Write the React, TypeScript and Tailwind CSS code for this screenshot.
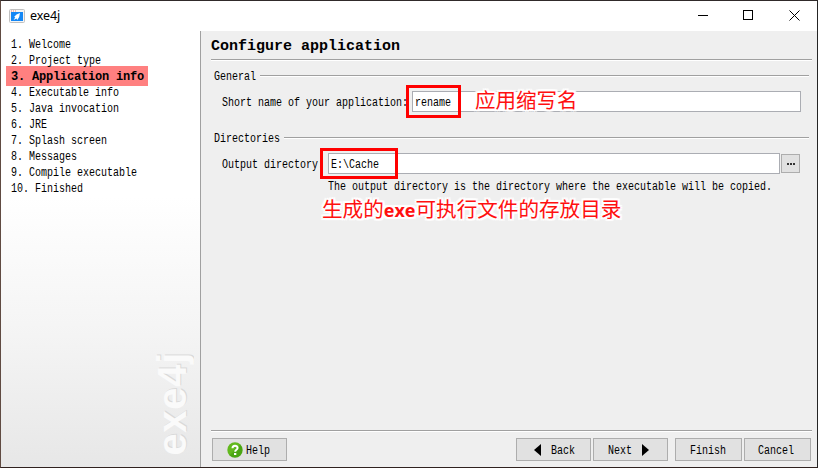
import type { ReactNode } from "react";

const steps = [
  "Welcome",
  "Project type",
  "Application info",
  "Executable info",
  "Java invocation",
  "JRE",
  "Splash screen",
  "Messages",
  "Compile executable",
  "Finished",
];

const ACTIVE_STEP = 2;

/* Narrow fixed-width label: every character advances six pixels. */
function Label({ children }: { children: string }) {
  return (
    <span className="block shrink-0" style={{ width: children.length * 6 }}>
      <span className="block w-max origin-left translate-y-px scale-x-[0.8333] whitespace-pre">{children}</span>
    </span>
  );
}

function Rule() {
  return <div className="h-[2px] flex-1 border-t border-[#a0a0a0] bg-white" />;
}

function Section({ title }: { title: string }) {
  return (
    <div className="flex h-4 items-center px-[3px]">
      <Label>{title}</Label>
      <div className="ml-1 flex flex-1">
        <Rule />
      </div>
    </div>
  );
}

function Button({ className, children }: { className: string; children: ReactNode }) {
  return (
    <button
      className={`flex h-[23px] items-center justify-center border border-[#adadad] bg-[#e1e1e1] ${className}`}
    >
      {children}
    </button>
  );
}

function AppIcon() {
  return (
    <svg width="16" height="14" viewBox="0 0 16 14">
      <rect x="0.5" y="0.5" width="15" height="13" rx="1" fill="#f4f4f4" stroke="#c0c0c0" />
      <path d="M2 1.5h1v1H2zM4 1.5h1v1H4zM6 1.5h1v1H6z" fill="#e8826a" />
      <rect x="2" y="3" width="12" height="9" fill="#1487f5" />
      <path d="M11 4 7.5 5.5 5 8l1.3.3L4.6 11l2.9-1.5.8 1.5L10.2 8z" fill="#fff" />
    </svg>
  );
}

function HelpIcon() {
  return (
    <svg width="16" height="16" viewBox="0 0 16 16">
      <defs>
        <linearGradient id="help" x1="0" y1="0" x2="1" y2="1">
          <stop offset="0.45" stopColor="#62b91d" />
          <stop offset="0.55" stopColor="#4aa512" />
        </linearGradient>
      </defs>
      <circle cx="8" cy="8" r="7.7" fill="url(#help)" />
      <path
        d="M5.5 6.3C5.5 3 10.6 3.1 10.6 6c0 1.8-2.4 1.8-2.4 3.7"
        fill="none"
        stroke="#fff"
        strokeWidth="2"
      />
      <rect x="7" y="11" width="2.3" height="2" fill="#fff" />
    </svg>
  );
}

const outline =
  "[text-shadow:2px_0_0_#fff,-2px_0_0_#fff,0_2px_0_#fff,0_-2px_0_#fff,2px_2px_1px_#fff,-2px_-2px_1px_#fff,2px_-2px_1px_#fff,-2px_2px_1px_#fff]";

export default function App() {
  return (
    <div className="relative flex h-[468px] w-[818px] flex-col overflow-hidden border border-t-[#302a2a] border-r-[#252525] border-b-[#30221f] border-l-[#604b42] bg-[#efefef] font-['Liberation_Mono','Noto_Sans_CJK_SC',monospace] text-[12px] leading-4 text-black">
      <header className="flex h-[30px] shrink-0 items-center bg-white pl-2">
        <AppIcon />
        <span className="ml-[5px] font-['Noto_Sans','Open_Sans',sans-serif] text-[12.5px] tracking-[-0.1px]">
          exe4j
        </span>
        <svg className="ml-auto mr-[17px]" width="103" height="12" viewBox="0 0 103 12" fill="none" stroke="#000">
          <path d="M1 5.5h10" />
          <rect x="46.5" y="0.5" width="9" height="9" />
          <path d="m92.5 0.5 10 10m0-10-10 10" />
        </svg>
      </header>

      <div className="flex min-h-0 flex-1">
        <aside className="flex w-[200px] shrink-0 flex-col border-r border-[#a0a0a0] bg-[linear-gradient(#fff_0%,#fff_38%,#f4f4f4_70%,#e7e7e7_100%)] pt-[5px]">
          {steps.map((step, i) =>
            i === ACTIVE_STEP ? (
              <div
                key={step}
                className="-my-0.5 ml-[5px] h-5 w-[142px] bg-[#ff8080] pt-[3px] pl-[5px] font-bold tracking-[-0.2px] whitespace-pre"
              >
                {`${i + 1}. ${step}`}
              </div>
            ) : (
              <div key={step} className="relative h-4 pl-[10px]">
                <Label>{`${i + 1}. ${step}`}</Label>
              </div>
            ),
          )}
          <div className="mt-auto mr-[9px] mb-[11px] rotate-180 self-end font-['Liberation_Sans',sans-serif] text-[40px] leading-[38px] font-bold tracking-[0.7px] text-[#fafafa] [text-shadow:1px_1px_0_#d9d9d9] [writing-mode:vertical-rl]">
            exe4j
          </div>
        </aside>

        <main className="flex min-w-0 flex-1 flex-col pr-[5px] pl-[10px]">
          <h1 className="h-7 pt-[6px] text-[15px] leading-5 font-bold">Configure application</h1>
          <div className="flex">
            <Rule />
          </div>

          <div className="mt-[7px]">
            <Section title="General" />
          </div>
          <div className="mt-[7px] flex h-[21px] items-center pl-[11px]">
            <Label>Short name of your application:</Label>
            <div className="ml-1 flex h-[21px] w-[389px] items-center border border-[#abadb3] bg-white pl-[2px]">
              <Label>rename</Label>
            </div>
          </div>

          <div className="mt-[18px]">
            <Section title="Directories" />
          </div>
          <div className="mt-[7px] flex h-[21px] items-center pl-[11px]">
            <Label>Output directory:</Label>
            <div className="ml-1 flex h-[21px] w-[452px] items-center border border-[#abadb3] bg-white pl-[2px]">
              <Label>E:\Cache</Label>
            </div>
            <div className="ml-px flex h-[19px] w-[19px] items-center justify-center gap-px border border-[#adadad] bg-[#e1e1e1]">
              <i className="h-[2px] w-[2px] bg-[#333]" />
              <i className="h-[2px] w-[2px] bg-[#333]" />
              <i className="h-[2px] w-[2px] bg-[#333]" />
            </div>
          </div>
          <div className="mt-[4px] pl-[117px]">
            <Label>The output directory is the directory where the executable will be copied.</Label>
          </div>

          <footer className="mt-auto pb-[6px]">
            <div className="flex">
              <Rule />
            </div>
            <div className="mt-[6px] flex px-px">
              <Button className="w-[75px] gap-[3px] pr-[2px]">
                <HelpIcon />
                <Label>Help</Label>
              </Button>
              <Button className="ml-auto w-[75px] gap-[10px] pl-[2px]">
                <svg width="7" height="12" viewBox="0 0 7 12">
                  <path d="M7 0v12L0 6z" />
                </svg>
                <Label>Back</Label>
              </Button>
              <Button className="ml-[2px] w-[75px] gap-[10px] pr-[5px]">
                <Label>Next</Label>
                <svg width="7" height="12" viewBox="0 0 7 12">
                  <path d="M0 0v12l7-6z" />
                </svg>
              </Button>
              <Button className="ml-[7px] w-[67px] pr-[2px]">
                <Label>Finish</Label>
              </Button>
              <Button className="ml-[2px] w-[67px] pr-[3px]">
                <Label>Cancel</Label>
              </Button>
            </div>
          </footer>
        </main>
      </div>

      {/* Red annotations over the form */}
      <div className="absolute top-[84px] left-[405px] h-[33px] w-[55px] border-[3px] border-[#ff0000]" />
      <div className="absolute top-[147px] left-[319px] h-[31px] w-[78px] border-[3px] border-[#ff0000]" />
      <div
        className={`absolute top-[84px] left-[474px] font-['Noto_Sans_CJK_SC',sans-serif] text-[20.5px] leading-[28px] whitespace-nowrap text-[#ff1010] ${outline}`}
      >
        应用缩写名
      </div>
      <div
        className={`absolute top-[193px] left-[321px] font-['Noto_Sans_CJK_SC',sans-serif] text-[20.6px] leading-[28px] whitespace-nowrap text-[#ff1010] ${outline}`}
      >
        生成的<b className="font-['Open_Sans',sans-serif] text-[18px]">exe</b>可执行文件的存放目录
      </div>
    </div>
  );
}
